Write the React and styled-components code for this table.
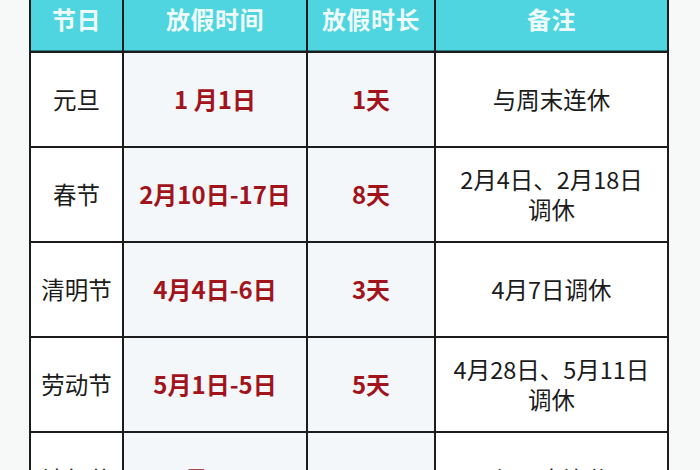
import React from 'react'
import styled, {createGlobalStyle} from 'styled-components'

const GlobalStyle = createGlobalStyle`
  html, body {
    margin: 0;
    padding: 0;
    background: #f7f8f8;
    overflow: hidden;
  }
  body {
    font-family: "Noto Sans CJK SC", "Noto Sans", sans-serif;
  }
`

const Page = styled.div`
  width: 700px;
  height: 470px;
  overflow: hidden;
  padding-left: 29px;
  box-sizing: border-box;
`

const Table = styled.div`
  display: grid;
  grid-template-columns: 91px 182px 126px 231px;
  grid-template-rows: 51px;
  grid-auto-rows: 93px;
  gap: 2px;
  width: 640px;
  box-sizing: border-box;
  border: 2px solid #1c1c1c;
  border-top: none;
  background: #1c1c1c;
`

const HeadCell = styled.div`
  display: flex;
  align-items: center;
  justify-content: center;
  padding-bottom: 14px;
  box-sizing: border-box;
  background: #4fd5df;
  color: #eefafb;
  font-size: 24px;
  font-weight: 700;
  letter-spacing: 0.5px;
  border-bottom: 1px solid #2b7f88;
`

const Cell = styled.div`
  display: flex;
  align-items: center;
  justify-content: center;
  flex-direction: column;
  text-align: center;
  background: ${p => (p.$tint ? '#f3f7fa' : '#ffffff')};
  color: ${p => (p.$red ? '#a2141c' : '#1b1b1b')};
  font-size: ${p => (p.$red ? '24px' : '23.5px')};
  font-weight: ${p => (p.$red ? 700 : 400)};
  line-height: 30px;
  padding-bottom: 2px;
  box-sizing: border-box;
`

const heads = ['节日', '放假时间', '放假时长', '备注']

const rows = [
  {name: '元旦', date: '1 月1日', days: '1天', note: ['与周末连休']},
  {name: '春节', date: '2月10日-17日', days: '8天', note: ['2月4日、2月18日', '调休']},
  {name: '清明节', date: '4月4日-6日', days: '3天', note: ['4月7日调休']},
  {name: '劳动节', date: '5月1日-5日', days: '5天', note: ['4月28日、5月11日', '调休']},
  {name: '端午节', date: '6月10日', days: '1天', note: ['与周末连休']},
]

const App = () => {
  return (
    <Page>
      <GlobalStyle />
      <Table>
        {heads.map(h => (
          <HeadCell key={h}>{h}</HeadCell>
        ))}
        {rows.map(row => (
          <React.Fragment key={row.name}>
            <Cell>{row.name}</Cell>
            <Cell $tint $red>{row.date}</Cell>
            <Cell $tint $red>{row.days}</Cell>
            <Cell>
              {row.note.map(line => (
                <span key={line}>{line}</span>
              ))}
            </Cell>
          </React.Fragment>
        ))}
      </Table>
    </Page>
  )
}

export default App
